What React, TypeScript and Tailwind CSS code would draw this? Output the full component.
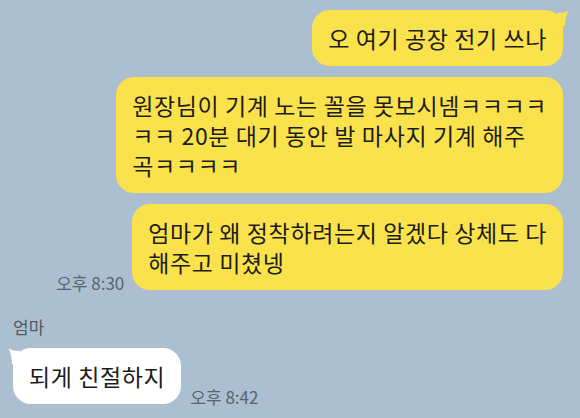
import React from 'react';

const font = { fontFamily: '"Noto Sans CJK KR", "Noto Sans", sans-serif' };

const TailRight: React.FC<{ color: string }> = ({ color }) => (
    <svg className="absolute top-0 -right-[6px]" width="12" height="16" viewBox="0 0 12 16">
        <path d="M0 3 Q7 3 11.5 0.5 Q8.5 5 8 16 L0 16 Z" fill={color} />
    </svg>
);

const TailLeft: React.FC<{ color: string }> = ({ color }) => (
    <svg className="absolute top-0 -left-[5px]" width="12" height="16" viewBox="0 0 12 16">
        <path d="M12 3 Q5 3 0.5 0.5 Q3.5 5 4 16 L12 16 Z" fill={color} />
    </svg>
);

const MyBubble: React.FC<{ lines: string[] }> = ({ lines }) => (
    <div className="relative bg-[#fae24c] rounded-[18px] px-4 py-[13px] text-[23px] tracking-[0.6px] leading-[30px] text-[#1c1c1c] whitespace-nowrap">
        {lines.map((l, i) => (
            <div key={i}>{l}</div>
        ))}
    </div>
);

export default function App() {
    return (
        <div className="w-[580px] h-[418px] bg-[#abbfd1] overflow-hidden flex flex-col pt-[10px]" style={font}>
            <div className="flex flex-col items-end gap-[11px] pr-[17px]">
                <div className="relative">
                    <TailRight color="#fae24c" />
                    <MyBubble lines={['오 여기 공장 전기 쓰나']} />
                </div>
                <MyBubble lines={['원장님이 기계 노는 꼴을 못보시넴ㅋㅋㅋㅋ', 'ㅋㅋ 20분 대기 동안 발 마사지 기계 해주', '곡ㅋㅋㅋㅋ']} />
                <div className="flex items-end gap-2">
                    <span className="text-[17px] leading-[20px] mb-[-3px] text-[#59646f]">오후 8:30</span>
                    <MyBubble lines={['엄마가 왜 정착하려는지 알겠다 상체도 다', '해주고 미쳤넹']} />
                </div>
            </div>
            <div className="flex flex-col items-start pl-[13px] mt-[26px]">
                <span className="text-[17px] leading-[22px] text-[#4f5a66]">엄마</span>
                <div className="flex items-end gap-[9px] mt-[10px]">
                    <div className="relative">
                        <TailLeft color="#ffffff" />
                        <div className="relative bg-white rounded-[18px] px-4 py-[13px] text-[23px] tracking-[0.6px] leading-[30px] text-[#1c1c1c] whitespace-nowrap">
                            되게 친절하지
                        </div>
                    </div>
                    <span className="text-[17px] leading-[20px] mb-[-3px] text-[#59646f]">오후 8:42</span>
                </div>
            </div>
        </div>
    );
}
